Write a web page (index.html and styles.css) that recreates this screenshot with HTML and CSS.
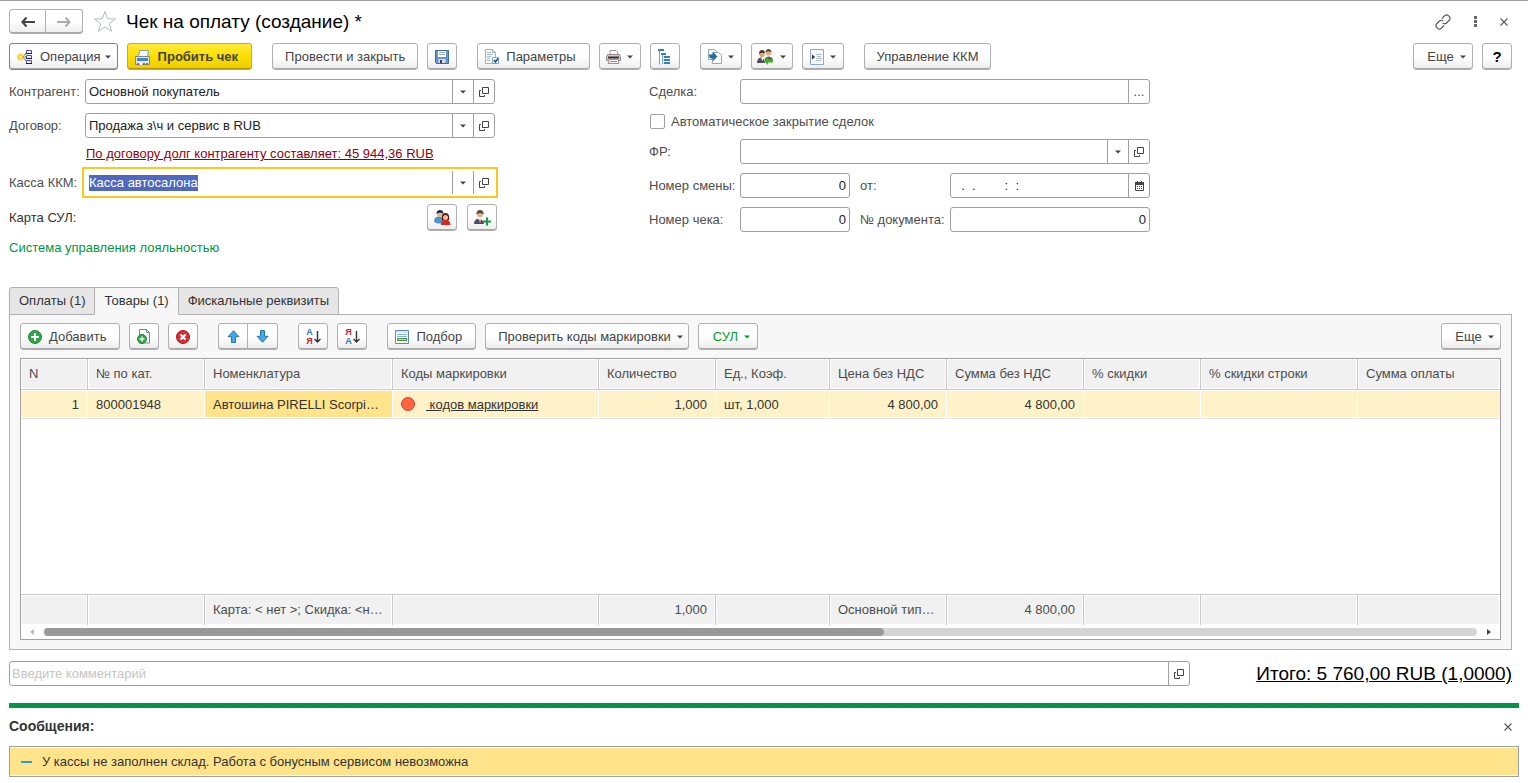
FILE: index.html
```html
<!DOCTYPE html>
<html lang="ru">
<head>
    <meta charset="UTF-8">
    <meta name="viewport" content="width=device-width, initial-scale=1.0">
    <title>Чек на оплату (создание) *</title>
    <link rel="stylesheet" href="styles.css">
</head>
<body>
    <!-- Shared icons -->
    <svg class="sprite" aria-hidden="true">
        <symbol id="i-caret" viewBox="0 0 6 4"><path d="M0 0.5h6L3 3.5z" fill="currentColor"/></symbol>
        <symbol id="i-open" viewBox="0 0 10 10"><path d="M3.5 0.5h6v6h-6z M2 3.5H0.5v6h5V8" fill="none" stroke="#444"/></symbol>
        <symbol id="i-close" viewBox="0 0 8 8"><path d="M0.5 0.5l7 7M7.5 0.5l-7 7" fill="none" stroke="#555" stroke-width="1.1"/></symbol>
    </svg>

    <div class="window">
        <header class="title-bar">
            <div class="button-pair nav">
                <button class="btn" type="button" aria-label="Назад"><svg width="14" height="10" viewBox="0 0 14 10"><path d="M5.5 0.5L1.5 5l4 4.5M2 5h12" fill="none" stroke="#444" stroke-width="2.2"/></svg></button>
                <button class="btn" type="button" aria-label="Вперед"><svg width="14" height="10" viewBox="0 0 14 10"><path d="M8.500 0.5l4 4.5-4 4.5M12 5H0" fill="none" stroke="#aaa" stroke-width="2"/></svg></button>
            </div>
            <button class="plain" type="button" aria-label="В избранное"><svg width="24" height="23" viewBox="0 0 24 23"><path d="M12 1.500l2.700 7.300 7.800.2-6.200 4.800 2.300 7.500L12 16.900l-6.600 4.400 2.300-7.500L1.500 9l7.800-.2z" fill="#fff" stroke="#b4bac2"/></svg></button>
            <h1>Чек на оплату (создание) *</h1>
            <div class="window-tools">
                <button class="plain" type="button" aria-label="Ссылка"><svg width="16" height="16" viewBox="0 0 16 16"><g fill="none" stroke="#555" stroke-width="1.2"><path d="M7 4.500l2.800-2.800a2.500 2.500 0 0 1 3.600 0l.9.9a2.500 2.500 0 0 1 0 3.600L11.500 9a2.500 2.500 0 0 1-3.600 0"/><path d="M9 11.500l-2.800 2.800a2.500 2.500 0 0 1-3.600 0l-.9-.9a2.500 2.500 0 0 1 0-3.600L4.500 7a2.500 2.500 0 0 1 3.600 0"/></g></svg></button>
                <button class="plain" type="button" aria-label="Меню"><svg width="3" height="11" viewBox="0 0 3 11"><path d="M0 0h3v3H0zM0 4h3v3H0zM0 8h3v3H0z" fill="#666"/></svg></button>
                <button class="plain" type="button" aria-label="Закрыть"><svg width="8" height="8"><use href="#i-close"/></svg></button>
            </div>
        </header>

        <div class="toolbar">
            <div class="group">
                <button class="btn with-icon dark" type="button"><svg width="16" height="16" viewBox="0 0 16 16"><path d="M6 8l4-5M6 8l4 5M6 8h4" stroke="#222" stroke-dasharray="1.500 0.7"/><path d="M9.500 1.500h5v3h-5zM9.500 6.500h5v3h-5zM9.500 11.500h5v3h-5z" fill="#eef" stroke="#5050a8"/><path d="M9 4.500h6M9 9.500h6M9 14.500h6" stroke="#16168c"/><path d="M3.500 4.500v7M0 8h7M1 5.500l5 5M6 5.500l-5 5" stroke="#f5c400" stroke-width="1.300"/><circle cx="3.500" cy="8" r="1.500" fill="#fff7a0"/></svg>Операция<svg class="caret"><use href="#i-caret"/></svg></button>
                <button class="btn with-icon primary" type="button"><svg width="16" height="17" viewBox="0 0 16 17"><path d="M3.500 8L4.500 1.500h9L12.500 8z" fill="#f4f7fa" stroke="#8d9cab"/><path d="M0.500 7.500h14v8h-14z" fill="#dce8f3" stroke="#7189a5"/><path d="M2 9h11v3H2z" fill="#5181b5"/><path d="M2 14h2v2H2z" fill="#e44"/><path d="M5 14h2v2H5z" fill="#fff"/><path d="M8 14h2v2H8z" fill="#3a3"/><path d="M11 14h2v2h-2z" fill="#e44"/></svg>Пробить чек</button>
            </div>
            <div class="group">
                <button class="btn" type="button">Провести и закрыть</button>
                <button class="btn square" type="button" aria-label="Записать"><svg width="14" height="14" viewBox="0 0 14 14"><path d="M0.5 0.5h13v13h-12l-1-1z" fill="#6797c8" stroke="#3f6b9a"/><path d="M3 1h8v6H3z" fill="#fff"/><path d="M4 2.500h6M4 4.500h6" stroke="#9ab"/><path d="M3.500 9h7v4h-7z" fill="#d5dde5"/><path d="M5 10h2v3H5z" fill="#345"/></svg></button>
            </div>
            <div class="group">
                <button class="btn with-icon" type="button"><svg width="14" height="16" viewBox="0 0 14 16"><path d="M0.500 0.500h7l3 3v11h-10z" fill="#f8fbfd" stroke="#9db3c4"/><path d="M7.500 0.500v3h3" fill="none" stroke="#9db3c4"/><path d="M2 3.500h4M2 5.500h6M2 7.500h4M2 9.500h3M2 11.500h3" stroke="#a3bdd0"/><path d="M7.500 8.500h6v6h-6z" fill="#fff" stroke="#7aa7d0"/><path d="M9 11l1.500 2L13 9.500" fill="none" stroke="#12508c" stroke-width="1.600"/></svg>Параметры</button>
                <button class="btn drop" type="button" aria-label="Печать"><svg width="15" height="14" viewBox="0 0 15 14"><path d="M4 5V0.500h6l1.500 1.500v3z" fill="#fff" stroke="#99a"/><path d="M1.500 4.500h12l1 2v4h-14v-4z" fill="#d3cbc7" stroke="#938a86"/><path d="M2 7.500h11" stroke="#3d3030" stroke-width="2"/><path d="M3 9.500h9l1 4H2z" fill="#fff" stroke="#a08d85"/><path d="M4 11.500h7" stroke="#c8714f"/></svg><svg class="caret"><use href="#i-caret"/></svg></button>
                <button class="btn square" type="button" aria-label="Структура"><svg width="14" height="16" viewBox="0 0 14 16"><path d="M0 0h6v2H0zM3 4h5v2H3zM6 7h6v2H6zM6 10h6v2H6zM6 13h6v2H6z" fill="#3a80b5"/><path d="M1.500 2v13.500M4.500 6v8.500h1M4.500 8h1M4.500 11h1" stroke="#79a5c5" fill="none"/></svg></button>
            </div>
            <div class="group">
                <button class="btn drop" type="button" aria-label="Создать на основании"><svg width="15" height="15" viewBox="0 0 15 15"><path d="M1.500 0.500h6l2 2v8h-8z" fill="#f6f9fc" stroke="#8ea6b9"/><path d="M5.500 3.500h6l3 3v8h-9z" fill="#fff" stroke="#8ea6b9"/><path d="M2 5.500h4V3l4.500 4.500L6 12V9.500H4Q2 9 2 5.500z" fill="#246ba4"/></svg><svg class="caret"><use href="#i-caret"/></svg></button>
                <button class="btn drop" type="button" aria-label="Контакты"><svg width="17" height="16" viewBox="0 0 17 16"><path d="M0 14q0-5 4-5.500l3 1 1 4.500z" fill="#4a4f58"/><path d="M8 10q0-2 4-2.500 4 .5 4 4v1.500H8z" fill="#5b5f68"/><path d="M4 9l1.500 3L7 9z" fill="#fff"/><circle cx="5" cy="5.500" r="2.700" fill="#dda878"/><path d="M2 5q0-4 3-4t3 3.500Q5 3 2 5z" fill="#4b3423"/><circle cx="11.500" cy="4" r="2.600" fill="#e2b084"/><path d="M8.500 3.500q0-3.500 3-3.500t3 3.500Q12 1.500 8.500 3.500z" fill="#66503c"/><path d="M7 12l4-4v2.500h5v3h-5V16z" fill="#3fb618"/></svg><svg class="caret"><use href="#i-caret"/></svg></button>
                <button class="btn drop" type="button" aria-label="Отчеты"><svg width="14" height="16" viewBox="0 0 14 16"><path d="M0.500 0.500h13v15h-13z" fill="#f5f9fc" stroke="#88aac8"/><path d="M6 5.500h6M7 7.500h4M6 9.500h6M6 11.500h5" stroke="#a6bccd"/><path d="M2 5.500l3 2.500-3 2.500z" fill="#334"/></svg><svg class="caret"><use href="#i-caret"/></svg></button>
            </div>
            <div class="group">
                <button class="btn" type="button">Управление ККМ</button>
            </div>
            <div class="group right">
                <button class="btn menu" type="button">Еще<svg class="caret"><use href="#i-caret"/></svg></button>
                <button class="btn square help" type="button">?</button>
            </div>
        </div>

        <form class="form">
            <div class="column left">
                <label for="partner">Контрагент:</label>
                <div class="field">
                    <input type="text" id="partner" value="Основной покупатель">
                    <button type="button" aria-label="Выбрать"><svg class="caret"><use href="#i-caret"/></svg></button>
                    <button type="button" aria-label="Открыть"><svg width="10" height="10"><use href="#i-open"/></svg></button>
                </div>

                <label for="contract">Договор:</label>
                <div class="field">
                    <input type="text" id="contract" value="Продажа з\ч и сервис в RUB">
                    <button type="button" aria-label="Выбрать"><svg class="caret"><use href="#i-caret"/></svg></button>
                    <button type="button" aria-label="Открыть"><svg width="10" height="10"><use href="#i-open"/></svg></button>
                </div>

                <a class="debt" href="#">По договору долг контрагенту составляет: 45 944,36 RUB</a>

                <label for="kkm">Касса ККМ:</label>
                <div class="field active">
                    <input type="text" id="kkm" value="Касса автосалона">
                    <button type="button" aria-label="Выбрать"><svg class="caret"><use href="#i-caret"/></svg></button>
                    <button type="button" aria-label="Открыть"><svg width="10" height="10"><use href="#i-open"/></svg></button>
                </div>

                <span class="card-label">Карта СУЛ:</span>
                <div class="card-buttons">
                    <button class="btn square" type="button" aria-label="Выбрать клиента"><svg width="17" height="16" viewBox="0 0 17 16"><path d="M0 12q0-5 4-5.500 5 0 5 4l-1 3Q3 14 0 12z" fill="#4b94cf"/><circle cx="6" cy="4" r="3" fill="#e5b58c"/><path d="M2.500 4Q2.500 0 6 0t3.500 4Q6 1.500 2.500 4z" fill="#222d3a"/><path d="M7 15q0-5 4.500-5.500 4.500 0 5 5.500z" fill="#dc281e"/><path d="M8 10q-1-7 3.500-7t3.500 7z" fill="#501713"/><circle cx="11.500" cy="7.500" r="2.500" fill="#f0bf98"/></svg></button>
                    <button class="btn square" type="button" aria-label="Добавить клиента"><svg width="17" height="16" viewBox="0 0 17 16"><path d="M0 14q0-5 5-5.500 4 .5 5 5.500z" fill="#4a4b68"/><path d="M4 8h4l-2 5z" fill="#fff"/><path d="M5.500 9.500h1v4h-1z" fill="#b33"/><circle cx="6" cy="4.500" r="3" fill="#ddb088"/><path d="M2.500 4.500Q2 0 6 0t3.500 4.500Q6 1.500 2.500 4.500z" fill="#5d4a3b"/><path d="M13 7.500v8M9 11.500h8" stroke="#159a45" stroke-width="2"/></svg></button>
                </div>

                <div class="loyalty">Система управления лояльностью</div>
            </div>

            <div class="column right-side">
                <label for="deal">Сделка:</label>
                <div class="field wide">
                    <input type="text" id="deal">
                    <button type="button" aria-label="Выбрать сделку">...</button>
                </div>

                <label class="check"><input type="checkbox">Автоматическое закрытие сделок</label>

                <label for="fr">ФР:</label>
                <div class="field wide">
                    <input type="text" id="fr">
                    <button type="button" aria-label="Выбрать"><svg class="caret"><use href="#i-caret"/></svg></button>
                    <button type="button" aria-label="Открыть"><svg width="10" height="10"><use href="#i-open"/></svg></button>
                </div>

                <label for="shift">Номер смены:</label>
                <div class="field"><input class="number" type="text" id="shift" value="0"></div>
                <label class="second" for="date">от:</label>
                <div class="field">
                    <input type="text" id="date" value="  .  .        :  :">
                    <button type="button" aria-label="Календарь"><svg width="9" height="10" viewBox="0 0 9 10"><path d="M0.500 1.500h8v8h-8z" fill="#fff" stroke="#444"/><path d="M0 1h9v3H0z" fill="#444"/><path d="M2.500 0v2M6.500 0v2" stroke="#444"/><path d="M2 5.500h5M2 7.500h5" stroke="#444" stroke-dasharray="1 1"/></svg></button>
                </div>

                <label for="receipt">Номер чека:</label>
                <div class="field"><input class="number" type="text" id="receipt" value="0"></div>
                <label class="second" for="document">№ документа:</label>
                <div class="field"><input class="number" type="text" id="document" value="0"></div>
            </div>
        </form>

        <div class="tabs" role="tablist">
            <button type="button" role="tab">Оплаты (1)</button>
            <button class="current" type="button" role="tab" aria-selected="true">Товары (1)</button>
            <button type="button" role="tab">Фискальные реквизиты</button>
        </div>

        <div class="panel">
            <div class="toolbar">
                <div class="group">
                    <button class="btn with-icon" type="button"><svg width="14" height="14" viewBox="0 0 14 14"><circle cx="7" cy="7" r="6.500" fill="#31a646" stroke="#20873a"/><path d="M7 3v8M3 7h8" stroke="#fff" stroke-width="2"/></svg>Добавить</button>
                    <button class="btn square" type="button" aria-label="Скопировать"><svg width="14" height="15" viewBox="0 0 14 15"><path d="M2.500 0.500h7l3 3v10.500h-10z" fill="#fff" stroke="#74869a"/><path d="M9.500 0.500v3h3" fill="none" stroke="#74869a"/><circle cx="5" cy="10" r="4.500" fill="#31a646" stroke="#20873a"/><path d="M5 7.500v5M2.500 10h5" stroke="#fff" stroke-width="1.400"/></svg></button>
                    <button class="btn square" type="button" aria-label="Удалить"><svg width="14" height="14" viewBox="0 0 14 14"><circle cx="7" cy="7" r="6.500" fill="#dc2c33" stroke="#b3161f"/><path d="M4.500 4.500l5 5M9.500 4.500l-5 5" stroke="#fff" stroke-width="2.200"/></svg></button>
                </div>
                <div class="group">
                    <div class="button-pair">
                        <button class="btn square" type="button" aria-label="Вверх"><svg width="13" height="13" viewBox="0 0 13 13"><path d="M6.500 0.700l5.500 6H8.500v5.800h-4V6.700H1z" fill="#3fa9ec" stroke="#2678ae"/></svg></button>
                        <button class="btn square" type="button" aria-label="Вниз"><svg width="13" height="13" viewBox="0 0 13 13"><path d="M6.500 12.300l5.500-6H8.500V0.500h-4v5.800H1z" fill="#3fa9ec" stroke="#2678ae"/></svg></button>
                    </div>
                </div>
                <div class="group">
                    <button class="btn square" type="button" aria-label="Сортировать по возрастанию"><span class="sort"><b class="blue">А</b><b class="red">Я</b></span><svg width="7" height="12" viewBox="0 0 7 12"><path d="M3.500 0v10M0.500 8l3 3 3-3" fill="none" stroke="#333" stroke-width="1.400"/></svg></button>
                    <button class="btn square" type="button" aria-label="Сортировать по убыванию"><span class="sort"><b class="red">Я</b><b class="blue">А</b></span><svg width="7" height="12" viewBox="0 0 7 12"><path d="M3.500 0v10M0.500 8l3 3 3-3" fill="none" stroke="#333" stroke-width="1.400"/></svg></button>
                </div>
                <div class="group">
                    <button class="btn with-icon" type="button"><svg width="14" height="14" viewBox="0 0 14 14"><path d="M0.500 0.500h13v13h-13z" fill="#fff" stroke="#5888bd"/><path d="M1 1h12v2H1z" fill="#d8e8f8"/><path d="M2 4.500h10M2 6.500h10" stroke="#8bafd5"/><path d="M2 8h10v3H2z" fill="#4c9148"/><path d="M3 9.500h8" stroke="#b8dcaf"/></svg>Подбор</button>
                    <button class="btn menu" type="button">Проверить коды маркировки<svg class="caret"><use href="#i-caret"/></svg></button>
                    <button class="btn menu green" type="button">СУЛ<svg class="caret"><use href="#i-caret"/></svg></button>
                </div>
                <div class="group right">
                    <button class="btn menu" type="button">Еще<svg class="caret"><use href="#i-caret"/></svg></button>
                </div>
            </div>

            <div class="grid">
                <table>
                    <colgroup>
                        <col class="c-n"><col class="c-small"><col class="c-name"><col class="c-marks"><col class="c-small"><col class="c-unit"><col class="c-small"><col class="c-sum"><col class="c-small"><col class="c-row"><col>
                    </colgroup>
                    <thead>
                        <tr>
                            <th>N</th>
                            <th>№ по кат.</th>
                            <th>Номенклатура</th>
                            <th>Коды маркировки</th>
                            <th>Количество</th>
                            <th>Ед., Коэф.</th>
                            <th>Цена без НДС</th>
                            <th>Сумма без НДС</th>
                            <th>% скидки</th>
                            <th>% скидки строки</th>
                            <th>Сумма оплаты</th>
                        </tr>
                    </thead>
                    <tbody>
                        <tr class="selected">
                            <td class="num">1</td>
                            <td>800001948</td>
                            <td class="cell">Автошина PIRELLI Scorpion Winter</td>
                            <td><span class="dot"></span><a class="marks" href="#">&nbsp;кодов маркировки</a></td>
                            <td class="num">1,000</td>
                            <td>шт, 1,000</td>
                            <td class="num">4 800,00</td>
                            <td class="num">4 800,00</td>
                            <td></td>
                            <td></td>
                            <td></td>
                        </tr>
                        <tr class="space"><td colspan="11"></td></tr>
                    </tbody>
                    <tfoot>
                        <tr>
                            <td></td>
                            <td></td>
                            <td>Карта: &lt; нет &gt;; Скидка: &lt;нет&gt;</td>
                            <td></td>
                            <td class="num">1,000</td>
                            <td></td>
                            <td>Основной тип цен</td>
                            <td class="num">4 800,00</td>
                            <td></td>
                            <td></td>
                            <td></td>
                        </tr>
                    </tfoot>
                </table>
                <div class="scroll">
                    <svg width="4" height="6" viewBox="0 0 4 6"><path d="M4 0v6L0 3z" fill="#bbb"/></svg>
                    <div class="track"><div class="thumb"></div></div>
                    <svg width="4" height="6" viewBox="0 0 4 6"><path d="M0 0v6l4-3z" fill="#444"/></svg>
                </div>
            </div>
        </div>

        <div class="bottom">
            <div class="field comment">
                <input type="text" placeholder="Введите комментарий" aria-label="Комментарий">
                <button type="button" aria-label="Открыть"><svg width="10" height="10"><use href="#i-open"/></svg></button>
            </div>
            <a class="total" href="#">Итого: 5 760,00 RUB (1,0000)</a>
        </div>
    </div>

    <section class="messages">
        <div class="messages-head">
            <h2>Сообщения:</h2>
            <button class="plain" type="button" aria-label="Закрыть сообщения"><svg width="8" height="8"><use href="#i-close"/></svg></button>
        </div>
        <div class="message"><span>У кассы не заполнен склад. Работа с бонусным сервисом невозможна</span></div>
    </section>

    <script>
        // The cash desk field is being edited
        const kkm = document.getElementById('kkm');
        kkm.focus();
        kkm.select();
    </script>
</body>
</html>
```
FILE: styles.css
```css
* {
    box-sizing: border-box;
}

body {
    margin: 0;
    border-top: 1px solid #a0a0a0;
    background: #fff;
    color: #333;
    font-family: "Liberation Sans", Arial, sans-serif;
    font-size: 13px;
    line-height: 16px;
}

button,
input {
    font: inherit;
    color: inherit;
}

svg {
    display: block;
    flex: none;
}

.sprite {
    display: none;
}

.caret {
    width: 6px;
    height: 4px;
}

.window {
    padding: 8px 16px 0 9px;
}

/* Title */
.title-bar {
    display: flex;
    align-items: center;
    height: 25px;
}

.title-bar h1 {
    margin: 0 0 0 9px;
    font-size: 19px;
    line-height: 25px;
    font-weight: normal;
    color: #000;
}

.plain {
    display: flex;
    padding: 0;
    border: none;
    background: none;
}

.title-bar > .plain {
    margin-left: 10px;
}

.window-tools {
    display: flex;
    align-items: center;
    gap: 23px;
    margin-left: auto;
    padding-right: 4px;
}

/* Buttons */
.btn {
    display: flex;
    align-items: center;
    justify-content: center;
    height: 27px;
    padding: 1px 12px 0;
    border: 1px solid #b0b0b0;
    border-radius: 3px;
    background: linear-gradient(#fff 50%, #ececec);
    box-shadow: inset 0 -1px 0 #a8a8a8;
    color: #444;
    white-space: nowrap;
}

.btn.dark {
    border-color: #808080;
}

.btn.primary {
    border-color: #d0b000;
    background: linear-gradient(#ffea3a, #fcdf00 50%, #edcd00);
    box-shadow: inset 0 -1px 0 #b39700;
    font-weight: bold;
}

.btn.with-icon {
    gap: 7px;
    padding: 1px 13px 0 7px;
}

.btn.with-icon .caret {
    margin: 0 -7px 0 -3px;
}

.btn.square {
    width: 30px;
    padding: 0;
}

.btn.drop {
    width: 42px;
    gap: 6px;
    padding: 0;
}

.btn.menu {
    gap: 6px;
    min-width: 60px;
    padding-right: 5px;
}

.btn.green {
    color: #00a020;
}

.btn.help {
    color: #000;
    font-size: 15px;
    font-weight: bold;
}

.button-pair {
    display: flex;
}

.button-pair .btn:first-child {
    border-radius: 3px 0 0 3px;
}

.button-pair .btn:last-child {
    border-left: none;
    border-radius: 0 3px 3px 0;
}

.nav .btn {
    width: 37px;
    height: 25px;
    padding: 0;
}

.sort {
    margin-right: 1px;
    font-size: 9px;
    line-height: 9px;
}

.sort b {
    display: block;
}

.blue {
    color: #2878b4;
}

.red {
    color: #c02828;
}

.toolbar {
    display: flex;
    gap: 20px;
}

.window > .toolbar {
    margin: 9px 0;
}

.group {
    display: flex;
    gap: 9px;
}

.group.right {
    margin-left: auto;
}

/* Form fields */
.form {
    display: flex;
    gap: 152px;
    color: #4d4d4d;
}

.column {
    display: grid;
    align-items: center;
    align-content: start;
    row-gap: 9px;
}

.column label {
    white-space: nowrap;
}

.left {
    grid-template-columns: 76px 412px;
}

.right-side {
    grid-template-columns: 91px 110px 100px 200px;
}

.field {
    display: flex;
    height: 25px;
    border: 1px solid #a0a0a0;
    border-radius: 3px;
    background: #fff;
}

.left .field {
    margin-right: 2px;
}

.field input {
    flex: 1;
    min-width: 0;
    padding: 0 3px;
    border: none;
    outline: none;
    background: none;
    color: #222;
}

.field input::selection {
    background: #5068c0;
    color: #fff;
}

.field input::placeholder {
    color: #c4c4c4;
}

.field .number {
    text-align: right;
}

.field button {
    display: flex;
    align-items: center;
    justify-content: center;
    width: 21px;
    padding: 0;
    border: none;
    border-left: 1px solid #a0a0a0;
    background: none;
    color: #444;
}

.field.active {
    border-color: transparent;
    outline: 2px solid #fac81e;
    outline-offset: 1px;
    border-radius: 0;
}

.debt {
    grid-column: 2;
    padding-left: 1px;
    line-height: 14px;
    color: #900010;
}

.card-label {
    color: #333;
}

.card-buttons {
    display: flex;
    justify-content: flex-end;
    gap: 10px;
}

.loyalty {
    grid-column: 1 / -1;
    color: #009646;
}

.wide {
    grid-column: span 3;
}

.second {
    padding-left: 10px;
}

.check {
    grid-column: 1 / -1;
    display: flex;
    align-items: center;
    gap: 6px;
    height: 17px;
}

.check input {
    appearance: none;
    width: 15px;
    height: 15px;
    margin: 0 0 0 1px;
    border: 1px solid #a0a0a0;
    border-radius: 2px;
    background: #fff;
}

/* Tabs */
.tabs {
    display: flex;
    margin-top: 31px;
}

.tabs button {
    height: 28px;
    margin: 0 0 -1px -1px;
    padding: 0 9px;
    border: 1px solid #b0b0b0;
    background: #e6e6e6;
    color: #333;
}

.tabs button:first-child {
    margin-left: 0;
    border-radius: 3px 0 0 0;
}

.tabs button:last-child {
    border-radius: 0 3px 0 0;
}

.tabs .current {
    z-index: 1;
    border-bottom-color: #f7f7f7;
    background: #f7f7f7;
}

.panel {
    padding: 8px 10px 9px;
    border: 1px solid #b0b0b0;
    background: #f7f7f7;
}

/* Goods table */
.grid {
    margin-top: 8px;
    border: 1px solid #a0a0a0;
    background: #fff;
}

table {
    width: 100%;
    border-collapse: separate;
    border-spacing: 0;
    table-layout: fixed;
}

.c-n { width: 67px; }
.c-small { width: 117px; }
.c-name { width: 188px; }
.c-marks { width: 206px; }
.c-unit { width: 114px; }
.c-sum { width: 137px; }
.c-row { width: 157px; }

th,
td {
    padding: 0 8px;
    border-right: 1px solid #c8c8c8;
    overflow: hidden;
    text-align: left;
    text-overflow: ellipsis;
    white-space: nowrap;
}

th:last-child,
td:last-child {
    border-right: none;
}

th {
    height: 31px;
    border-bottom: 1px solid #c8c8c8;
    background: #f1f1f1;
    box-shadow: inset 0 0 0 1px #fff;
    color: #4d4d4d;
    font-weight: normal;
}

.num {
    text-align: right;
}

.selected td {
    height: 29px;
    padding-top: 1px;
    border-right-color: #fff;
    border-bottom: 1px solid #e4e4e4;
    background: #fff2c8;
    box-shadow: inset 0 1px 0 #fff, inset 0 -1px 0 #fff;
}

.selected .cell {
    background: #ffe48c;
}

.dot {
    display: inline-block;
    width: 14px;
    height: 14px;
    margin-right: 11px;
    border: 1px solid #d84030;
    border-radius: 50%;
    background: #ff6440;
    vertical-align: -2px;
}

.marks {
    color: #333;
}

.space td {
    height: 175px;
}

tfoot td {
    height: 31px;
    border-top: 1px solid #c8c8c8;
    background: #f1f1f1;
    box-shadow: inset 0 0 0 1px #fff;
    color: #4d4d4d;
}

.scroll {
    display: flex;
    align-items: center;
    gap: 10px;
    height: 14px;
    padding: 0 9px;
}

.track {
    flex: 1;
    height: 8px;
    border-radius: 4px;
    background: #d4d4d4;
}

.thumb {
    width: 840px;
    max-width: 100%;
    height: 8px;
    border-radius: 4px;
    background: #999;
}

/* Comment and total */
.bottom {
    display: flex;
    align-items: center;
    gap: 66px;
    margin-top: 11px;
}

.comment {
    flex: 1;
}

.comment input {
    padding: 0 2px;
}

.total {
    color: #000;
    font-size: 19px;
    line-height: 25px;
}

/* Messages */
.messages {
    margin: 17px 9px 0;
    border-top: 5px solid #009646;
}

.messages-head {
    display: flex;
    align-items: center;
    justify-content: space-between;
    height: 38px;
    padding-right: 7px;
}

.messages h2 {
    margin: 0;
    padding-bottom: 3px;
    font-size: 14px;
    line-height: 16px;
}

.message {
    display: flex;
    align-items: center;
    gap: 10px;
    height: 31px;
    padding: 0 11px;
    border: 1px solid #a0a0a0;
    background: #ffe48c;
    box-shadow: inset 0 1px 0 #fff, inset 0 -1px 0 #fff;
}

.message::before {
    content: "";
    width: 11px;
    height: 2px;
    background: #28a0dc;
}
```
